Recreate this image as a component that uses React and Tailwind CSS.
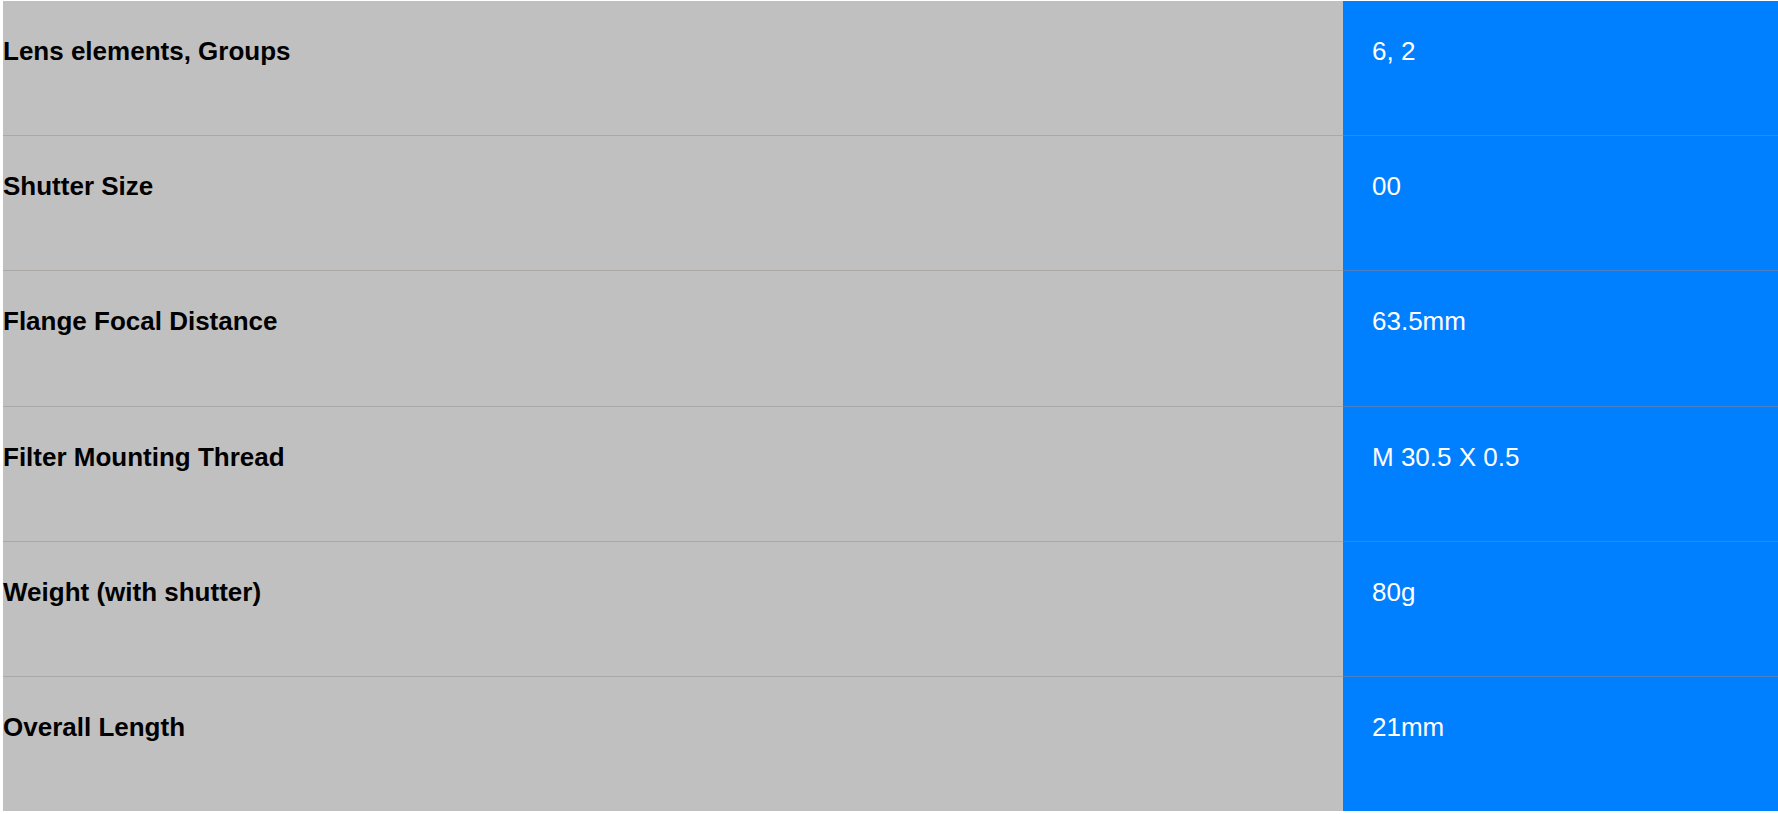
const specs = [
  { label: "Lens elements, Groups", value: "6, 2" },
  { label: "Shutter Size", value: "00" },
  { label: "Flange Focal Distance", value: "63.5mm" },
  { label: "Filter Mounting Thread", value: "M 30.5 X 0.5" },
  { label: "Weight (with shutter)", value: "80g" },
  { label: "Overall Length", value: "21mm" },
];

function SpecRow({ label, value, last }) {
  return (
    <div className={"flex " + (last ? "h-[134px]" : "h-[135.2px]")}>
      <div
        className={
          "flex-1 bg-[#c0c0c0] pt-[36px] text-[26px] font-bold leading-[29px] text-black " +
          (last ? "" : "border-b border-[#aca8a5]")
        }
      >
        {label}
      </div>
      <div
        className={
          "w-[435px] bg-[#007fff] pl-[29px] pt-[36px] text-[26px] leading-[29px] text-white " +
          (last ? "" : "border-b border-[#4f80c2]")
        }
      >
        {value}
      </div>
    </div>
  );
}

export default function App() {
  return (
    <div className="min-h-screen bg-white pl-[3px] pt-[1px] font-['Liberation_Sans',Arial,sans-serif]">
      <div className="flex flex-col">
        {specs.map((s, i) => (
          <SpecRow
            key={s.label}
            label={s.label}
            value={s.value}
            last={i === specs.length - 1}
          />
        ))}
      </div>
    </div>
  );
}
